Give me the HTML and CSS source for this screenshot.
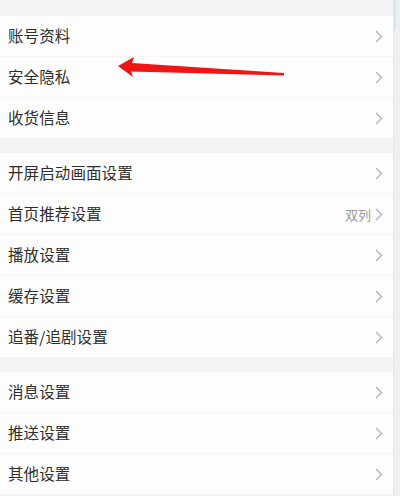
FILE: index.html
```html
<!DOCTYPE html>
<html lang="zh">
<head>
<meta charset="utf-8">
<link rel="stylesheet" href="styles.css">
</head>
<body>
<div class="page">
  <div class="list">
    <div class="gap gap-top"></div>
    <div class="group">
      <div class="row"><span class="label">账号资料</span><span class="right"><svg class="chev" viewBox="0 0 8 13"><path d="M1 1 L6.5 6.5 L1 12"/></svg></span></div>
      <div class="row"><span class="label">安全隐私</span><span class="right"><svg class="chev" viewBox="0 0 8 13"><path d="M1 1 L6.5 6.5 L1 12"/></svg></span></div>
      <div class="row"><span class="label">收货信息</span><span class="right"><svg class="chev" viewBox="0 0 8 13"><path d="M1 1 L6.5 6.5 L1 12"/></svg></span></div>
    </div>
    <div class="gap"></div>
    <div class="group">
      <div class="row"><span class="label">开屏启动画面设置</span><span class="right"><svg class="chev" viewBox="0 0 8 13"><path d="M1 1 L6.5 6.5 L1 12"/></svg></span></div>
      <div class="row"><span class="label">首页推荐设置</span><span class="right"><span class="value">双列</span><svg class="chev" viewBox="0 0 8 13"><path d="M1 1 L6.5 6.5 L1 12"/></svg></span></div>
      <div class="row"><span class="label">播放设置</span><span class="right"><svg class="chev" viewBox="0 0 8 13"><path d="M1 1 L6.5 6.5 L1 12"/></svg></span></div>
      <div class="row"><span class="label">缓存设置</span><span class="right"><svg class="chev" viewBox="0 0 8 13"><path d="M1 1 L6.5 6.5 L1 12"/></svg></span></div>
      <div class="row"><span class="label">追番/追剧设置</span><span class="right"><svg class="chev" viewBox="0 0 8 13"><path d="M1 1 L6.5 6.5 L1 12"/></svg></span></div>
    </div>
    <div class="gap"></div>
    <div class="group">
      <div class="row"><span class="label">消息设置</span><span class="right"><svg class="chev" viewBox="0 0 8 13"><path d="M1 1 L6.5 6.5 L1 12"/></svg></span></div>
      <div class="row"><span class="label">推送设置</span><span class="right"><svg class="chev" viewBox="0 0 8 13"><path d="M1 1 L6.5 6.5 L1 12"/></svg></span></div>
      <div class="row"><span class="label">其他设置</span><span class="right"><svg class="chev" viewBox="0 0 8 13"><path d="M1 1 L6.5 6.5 L1 12"/></svg></span></div>
    </div>
    <div class="gap"></div>
  </div>
  <div class="scrollbar"><div class="thumb"></div></div>
  <svg class="arrow" viewBox="0 0 400 496" width="400" height="496">
    <polygon points="118,66 134,57 132,63 284,73 284,75.5 131,71.5 133,77"/>
  </svg>
</div>
</body>
</html>
```

FILE: styles.css
```css
html, body {
  margin: 0;
  padding: 0;
  background: #f4f4f4;
}
body {
  font-family: "Noto Sans CJK SC", "Noto Sans", sans-serif;
}
.page {
  position: relative;
  width: 400px;
  height: 496px;
  overflow: hidden;
  display: flex;
}
.list {
  flex: 1;
  display: flex;
  flex-direction: column;
  background: #f4f4f4;
}
.gap {
  height: 15px;
  flex: none;
}
.gap-top {
  height: 16px;
}
.group {
  background: #fdfdfd;
}
.row {
  height: 40px;
  display: flex;
  align-items: center;
  justify-content: space-between;
  padding: 0 10px 0 8px;
  border-bottom: 1px solid #f5f5f5;
}
.row:last-child {
  border-bottom: none;
}
.label {
  font-size: 15.5px;
  line-height: 1;
  color: #2e2e2e;
  letter-spacing: 0.1px;
}
.right {
  display: flex;
  align-items: center;
  gap: 4px;
}
.value {
  font-size: 13px;
  line-height: 1;
  color: #9a9a9a;
}
.chev {
  width: 8px;
  height: 13px;
  fill: none;
  stroke: #b9b9b9;
  stroke-width: 1.5;
}
.scrollbar {
  width: 6px;
  flex: none;
  background: #efefef;
  border-left: 1px solid #e6e6e6;
}
.thumb {
  height: 30px;
  width: 2px;
  background: #d6e6f5;
}
.arrow {
  position: absolute;
  left: 0;
  top: 0;
  pointer-events: none;
}
.arrow polygon {
  fill: #f01515;
}
```
